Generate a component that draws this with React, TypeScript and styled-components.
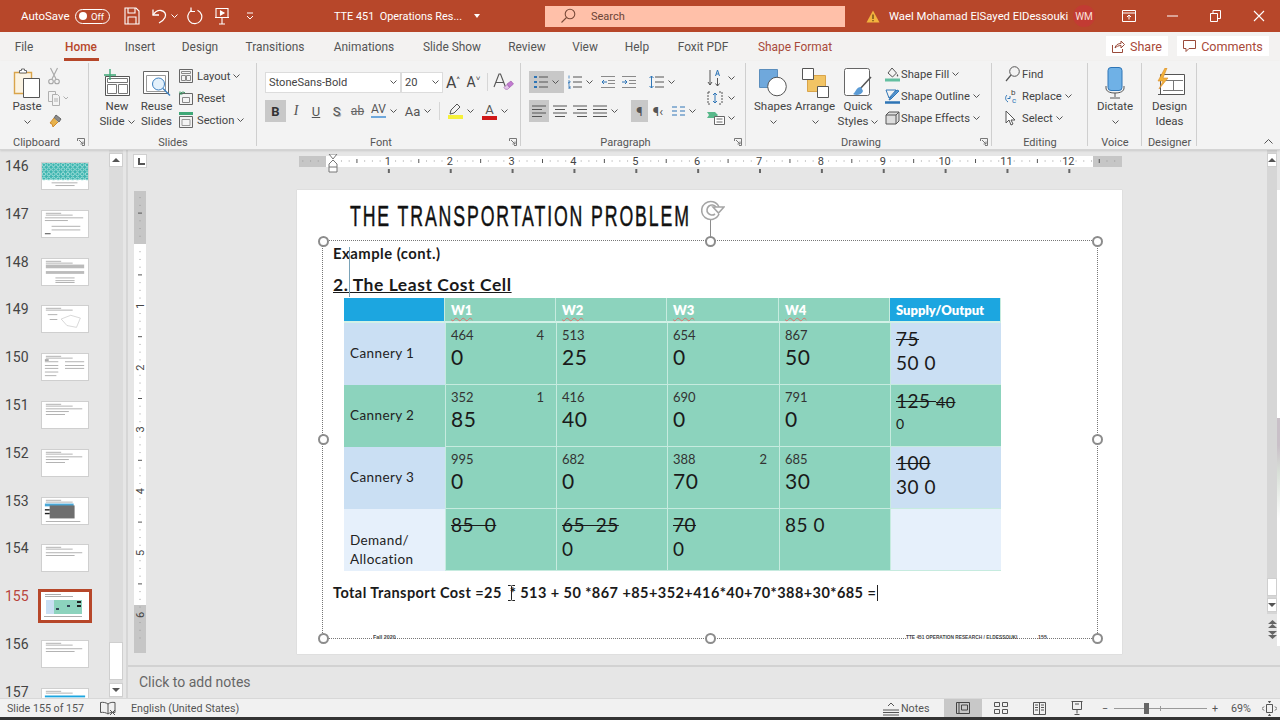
import React from 'react';
import styled, { createGlobalStyle } from 'styled-components';

const ui = `Roboto, "Liberation Sans", sans-serif`;
const gothic = `Lato, "Open Sans", sans-serif`;
const accent = '#B7472A';

const Global = createGlobalStyle`
  html, body { margin: 0; padding: 0; background: #e6e6e6; }
  #root { width: 1280px; height: 720px; overflow: hidden; }
  * { box-sizing: border-box; }
`;

const Page = styled.div`
  width: 1280px; height: 720px; display: flex; flex-direction: column;
  font-family: ${ui}; color: #444; overflow: hidden; background: #e6e6e6;
`;

/* ---------- icons ---------- */
const Svg = styled.svg`display: block; flex: none;`;
const Chev = ({ c = '#555' }: { c?: string }) => (
  <Svg width={7} height={4} viewBox="0 0 7 4" fill="none"><path d="M.5.5 3.500 3.500 6.500.5" stroke={c} /></Svg>
);
const SaveI = () => (
  <Svg width={16} height={18} viewBox="0 0 16 18" fill="none" stroke="#fff" strokeWidth="1.1">
    <path d="M1 1h11l3 3v13H1z" /><path d="M4 1v5h7V1M4 17v-7h8v7" />
  </Svg>
);
const UndoI = () => (
  <Svg width={18} height={18} viewBox="0 0 18 18" fill="none" stroke="#fff" strokeWidth="1.3">
    <path d="M2 8c2-3 5-5 8-4.500 4 .6 5.500 4 4 7-1 2-3 4-6 5.500" /><path d="M2 2.500V8h6" />
  </Svg>
);
const RedoI = () => (
  <Svg width={16} height={18} viewBox="0 0 16 18" fill="none" stroke="#fff" strokeWidth="1.2">
    <path d="M10.500 3.200A7 7 0 1 1 4.500 3.500" /><path d="M4 .5v4h4" />
  </Svg>
);
const PresentI = () => (
  <Svg width={16} height={18} viewBox="0 0 16 18" fill="none" stroke="#fff" strokeWidth="1.1">
    <path d="M2 1.500h12v9H2zM1 10.500h14M8 10.500V17M5 17h6" /><path d="M6.500 4l3.500 2-3.500 2z" fill="#fff" />
  </Svg>
);
const QatI = () => (
  <Svg width={8} height={8} viewBox="0 0 8 8" fill="none" stroke="#fff"><path d="M1 1h6M1 4l3 3 3-3" /></Svg>
);
const SearchI = () => (
  <Svg width={16} height={16} viewBox="0 0 16 16" fill="none" stroke="#7a4a3a" strokeWidth="1.1">
    <circle cx="10" cy="6" r="4.800" /><path d="M6.500 9.500 1.500 14.500" />
  </Svg>
);
const WarnI = () => (
  <Svg width={14} height={13} viewBox="0 0 14 13">
    <path d="M7 .5 13.500 12.500H.5z" fill="#F3B33E" /><path d="M7 4.500v4.500M7 10v1.300" stroke="#5a3a10" strokeWidth="1.200" />
  </Svg>
);
const RibbonDispI = () => (
  <Svg width={14} height={12} viewBox="0 0 14 12" fill="none" stroke="#fff">
    <path d="M.5.5h13v11H.5zM.5 3h13M7 9.500V5M5 7l2-2 2 2" />
  </Svg>
);
const MinI = () => <Svg width={11} height={2} viewBox="0 0 11 2"><path d="M0 1h11" stroke="#fff" /></Svg>;
const RestoreI = () => (
  <Svg width={11} height={12} viewBox="0 0 11 12" fill="none" stroke="#fff"><path d="M.5 3.500h7v8h-7zM3 3.500V.5h7.500v8H7.500" /></Svg>
);
const CloseI = () => (
  <Svg width={12} height={12} viewBox="0 0 12 12" stroke="#fff" strokeWidth="1.100"><path d="M1 1l10 10M11 1 1 11" /></Svg>
);
const PasteI = () => (
  <Svg width={28} height={31} viewBox="0 0 28 31" fill="none">
    <path d="M1.500 4.500h17v21h-17z" fill="#FBF3E2" stroke="#D9A44A" strokeWidth="1.400" />
    <path d="M6.500 5V2.500h2V1h3v1.500h2V5z" fill="#fff" stroke="#666" />
    <path d="M10.500 10.500h16v19h-16z" fill="#fff" stroke="#555" />
  </Svg>
);
const CutI = () => (
  <Svg width={12} height={18} viewBox="0 0 12 18" fill="none" stroke="#A6A6A6" strokeWidth="1.100">
    <path d="M2.500 1 8 12M9.500 1 4 12" /><circle cx="3" cy="14.500" r="2.300" /><circle cx="9" cy="14.500" r="2.300" />
  </Svg>
);
const CopyI = () => (
  <Svg width={20} height={15} viewBox="0 0 20 15" fill="none" stroke="#B0B0B0">
    <path d="M.5.5h7v10h-7z" /><path d="M4.500 3.500h5l2 2v9h-7z" fill="#f3f3f3" /><path d="M6 8h4M6 10h4" />
    <path d="M15.500 5.500l2.500 2.500 2-2" />
  </Svg>
);
const PainterI = () => (
  <Svg width={16} height={16} viewBox="0 0 16 16" fill="none">
    <path d="M8 3l5 4-2 3-5-4z" fill="#8a8a8a" stroke="#666" /><path d="M6 6 2 11l2 1 1 3 5-5" fill="#E7B24C" stroke="#D08A2C" />
  </Svg>
);
const NewSlideI = () => (
  <Svg width={28} height={28} viewBox="0 0 28 28" fill="none">
    <path d="M2.500 7.500h24v19h-24z" fill="#fff" stroke="#555" /><path d="M4.500 9.500h20v4h-20zM4.500 15.500h9v9h-9zM15.500 15.500h9v9h-9z" stroke="#777" />
    <path d="M7 0v11M1 6h12" stroke="#3FA877" strokeWidth="1.400" />
  </Svg>
);
const ReuseI = () => (
  <Svg width={30} height={29} viewBox="0 0 30 29" fill="none">
    <path d="M1.500 2.500h25v22h-25z" fill="#fff" stroke="#666" /><path d="M4.500 6.500h19v16h-19z" stroke="#999" />
    <circle cx="16.500" cy="15" r="6" fill="#E4F1FB" stroke="#3C80C0" /><path d="M21 19.500l7 7" stroke="#3C80C0" strokeWidth="1.400" />
  </Svg>
);
const LayoutI = () => (
  <Svg width={14} height={14} viewBox="0 0 14 14" fill="none" stroke="#666"><path d="M.5.5h13v13H.5z" /><path d="M2.500 2.500h9v2h-9zM2.500 6.500h4v5h-4zM7.500 6.500h4v5h-4z" stroke="#888" /></Svg>
);
const ResetI = () => (
  <Svg width={14} height={14} viewBox="0 0 14 14" fill="none"><path d="M.5 2.500h13v11H.5z" stroke="#666" /><path d="M3.500 6.500h7v5h-7z" stroke="#888" /><path d="M1 3c1-2 4-2.500 5-1M1 .5V3h2.500" stroke="#2E8B57" /></Svg>
);
const SectionI = () => (
  <Svg width={14} height={16} viewBox="0 0 14 16" fill="none"><path d="M0 1.500h14" stroke="#3FA877" strokeWidth="3" /><path d="M.5 4.500h13v11H.5z" stroke="#666" /><path d="M3 7.500h8v6H3z" stroke="#999" /></Svg>
);
const ClearI = () => (
  <Svg width={22} height={20} viewBox="0 0 22 20" fill="none">
    <path d="M2 15 7 2h1.500l5 13M4 10.500h7.500" stroke="#555" strokeWidth="1.100" />
    <path d="M15 12l4-3 2.500 3-4 3.500z" fill="#C27BD1" stroke="#9A55A8" strokeWidth=".6" /><path d="M12 15.500l3-3 2.500 3-2 1.800H13.500z" fill="#E3C4EA" stroke="#9A55A8" strokeWidth=".6" />
  </Svg>
);
const BulletI = () => (
  <Svg width={14} height={14} viewBox="0 0 14 14" stroke="#555"><path d="M5 2h9M5 7h9M5 12h9" /><path d="M0 2h3M0 7h3M0 12h3" stroke="#2E75B6" strokeWidth="2" /></Svg>
);
const NumberI = () => (
  <Svg width={14} height={14} viewBox="0 0 14 14" stroke="#555"><path d="M5 2h9M5 7h9M5 12h9" /><path d="M1 .5v3M0 6h2v1.500H0V9h2M0 11h2v3H0M.5 12.500H2" stroke="#2E75B6" strokeWidth=".8" fill="none" /></Svg>
);
const IndentI = ({ inc }: { inc?: boolean }) => (
  <Svg width={14} height={12} viewBox="0 0 14 12" fill="none" stroke="#8a8a8a">
    <path d="M0 .5h14M0 11.500h14M7 4.500h7M7 7.500h7" />
    <path d={inc ? 'M0 6h5M3 4l2 2-2 2' : 'M1 6h5M3 4 1 6l2 2'} stroke="#2E75B6" />
  </Svg>
);
const LineSpaceI = () => (
  <Svg width={15} height={14} viewBox="0 0 15 14" fill="none" stroke="#555"><path d="M6 2h9M6 7h9M6 12h9" /><path d="M2.500 1v12M.5 3l2-2 2 2M.5 11l2 2 2-2" stroke="#2E75B6" /></Svg>
);
const AlignI = ({ kind }: { kind: 'l' | 'c' | 'r' | 'j' }) => {
  const d = { l: 'M0 1h14M0 4.500h10M0 8h14M0 11.500h10', c: 'M0 1h14M2 4.500h10M0 8h14M2 11.500h10', r: 'M0 1h14M4 4.500h10M0 8h14M4 11.500h10', j: 'M0 1h14M0 4.500h14M0 8h14M0 11.500h14' }[kind];
  return <Svg width={14} height={12} viewBox="0 0 14 12" stroke="#555"><path d={d} /></Svg>;
};
const ColumnsI = () => (
  <Svg width={13} height={10} viewBox="0 0 13 10" stroke="#2E75B6"><path d="M0 1h5M0 5h5M0 9h5M8 1h5M8 5h5M8 9h5" /></Svg>
);
const DirI = () => (
  <Svg width={14} height={20} viewBox="0 0 14 20" fill="none" stroke="#555"><path d="M3 2v15M1 14l2 3 2-3" /><path d="M8.500 8 10.500 2l2 6M9.200 6h2.600" stroke="#2E75B6" /><path d="M10.500 10v8M8.500 15.500l2 2.500 2-2.500" /></Svg>
);
const AlignTextI = () => (
  <Svg width={16} height={14} viewBox="0 0 16 14" fill="none" stroke="#555"><path d="M1 1h3M12 1h3M1 13h3M12 13h3M1 1v12M15 1v12" strokeDasharray="2 1" /><path d="M8 2v10M6 4l2-2 2 2M6 10l2 2 2-2" stroke="#2E75B6" /></Svg>
);
const SmartI = () => (
  <Svg width={18} height={14} viewBox="0 0 18 14" fill="none"><path d="M0 1h8l3 3-3 3H0l2-3z" fill="#58B88A" /><path d="M7.500 5.500h10v8h-10z" fill="#fff" stroke="#666" /><path d="M9.500 8h6M9.500 11h6" stroke="#666" /></Svg>
);
const ShapesI = () => (
  <Svg width={28} height={28} viewBox="0 0 28 28" fill="none">
    <path d="M.5.500h18v18H.5z" fill="#6FA8DC" stroke="#5B8EBD" /><circle cx="18" cy="17.500" r="9.300" fill="#fff" stroke="#555" />
  </Svg>
);
const ArrangeI = () => (
  <Svg width={27} height={30} viewBox="0 0 27 30" fill="none">
    <path d="M5.500 7.500h18v16h-18z" fill="#F2C464" stroke="#D9A44A" /><path d="M.5.500h11v11H.5z" fill="#fff" stroke="#555" /><path d="M15.500 18.500h11v11h-11z" fill="#fff" stroke="#555" />
  </Svg>
);
const QuickI = () => (
  <Svg width={28} height={30} viewBox="0 0 28 30" fill="none">
    <rect x=".5" y=".5" width="25" height="27" rx="2" fill="#fff" stroke="#666" />
    <path d="M27 9 15 22" stroke="#555" strokeWidth="1.500" /><path d="M17 19c-5 0-5 5-8 7 3 2 9 1 10-3z" fill="#5B9BD5" />
  </Svg>
);
const FillI = () => (
  <Svg width={15} height={15} viewBox="0 0 15 15" fill="none"><path d="M7 1l4.500 5-4 4L3 6z" stroke="#555" /><path d="M12.500 7c1 1.500 1 2.500 0 2.500S11.500 8 12.500 7z" fill="#555" /><path d="M0 13h15" stroke="#63BFA0" strokeWidth="3" /></Svg>
);
const OutlineI = () => (
  <Svg width={15} height={15} viewBox="0 0 15 15" fill="none"><path d="M1 1h10L4 9z" fill="none" stroke="#2E75B6" /><path d="M12 1 5 9 4 11l2-1 8-8z" fill="#5B9BD5" stroke="#2E75B6" /><path d="M0 13.500h15" stroke="#2E75B6" strokeWidth="2.500" /></Svg>
);
const EffectI = () => (
  <Svg width={15} height={14} viewBox="0 0 15 14" fill="none" stroke="#555"><path d="M4 1h10v9l-3 3H1V4z" fill="#ddd" /><path d="M1 4h10v9M11 4l3-3" /></Svg>
);
const FindI = () => (
  <Svg width={15} height={16} viewBox="0 0 15 16" fill="none" stroke="#555"><circle cx="9.500" cy="5.500" r="4.800" /><path d="M6 9 1 15" strokeWidth="1.200" /></Svg>
);
const ReplaceI = () => (
  <Svg width={15} height={16} viewBox="0 0 15 16" fill="none">
    <path d="M2 7c-2 2-2 5 1 7M5 8v2.500H2.500" stroke="#2E75B6" />
    <text x="6" y="7" fontSize="8" fontFamily="Roboto" fill="#444">b</text><text x="7" y="15" fontSize="8" fontFamily="Roboto" fill="#2E75B6">c</text>
  </Svg>
);
const SelectI = () => (
  <Svg width={13} height={17} viewBox="0 0 13 17" fill="#fff" stroke="#555"><path d="M1 1v12l3-3 2 5 2-1-2-4h4z" /></Svg>
);
const MicI = () => (
  <Svg width={20} height={32} viewBox="0 0 20 32" fill="none">
    <rect x="3" y=".5" width="14" height="23" rx="3" fill="#6FB1E6" stroke="#2E75B6" />
    <path d="M1 19v2c0 3 3 5 9 5s9-2 9-5v-2M10 26v4M5 31h10" stroke="#555" />
  </Svg>
);
const IdeasI = () => (
  <Svg width={30} height={30} viewBox="0 0 30 30" fill="none">
    <path d="M5.500 6.500h24v20h-24z" fill="#fff" stroke="#555" /><path d="M8 22.500h20M18.500 12.500v10M8 12.500h20" stroke="#777" />
    <path d="M3 26.500h24" stroke="#555" />
    <path d="M10 0 3 13h5L4 21l9-11H8l4-10z" fill="#F2B33A" stroke="#D8892A" strokeWidth=".6" />
  </Svg>
);
const Launcher = () => (
  <Svg width={8} height={8} viewBox="0 0 8 8" fill="none" stroke="#777"><path d="M.5 3V.5H7.500V7.500H5M2 2l4 4M3.500 6H6V3.500" /></Svg>
);
const ShareI = () => (
  <Svg width={13} height={13} viewBox="0 0 13 13" fill="none" stroke="#9a4a3a"><path d="M.5 5v7.500h10V9" /><path d="M3 8c.5-3 3-4.500 6-4.500V1l3.500 3.500L9 8V5.500C6.500 5.500 4.500 6.500 3 8z" /></Svg>
);
const CommentI = () => (
  <Svg width={13} height={12} viewBox="0 0 13 12" fill="none" stroke="#9a4a3a"><path d="M.5.5h12v8H6l-3 3v-3H.5z" /></Svg>
);
const CollapseI = () => (
  <Svg width={9} height={5} viewBox="0 0 9 5" fill="none" stroke="#555"><path d="M.5 4.500l4-4 4 4" /></Svg>
);
const SpellI = () => (
  <Svg width={16} height={15} viewBox="0 0 16 15" fill="none" stroke="#555"><path d="M8 3C6 1.500 3 1 .5 1.500v10C3 11 6 11.500 8 13 10 11.500 12 11 15 11.500V1.500C12 1 10 1.500 8 3zM8 3v10" /><path d="M10 9l5 5M15 9l-5 5" /></Svg>
);
const NotesI = () => (
  <Svg width={16} height={15} viewBox="0 0 16 15" fill="none" stroke="#555"><path d="M0 9h16M0 11.500h16M0 14h16M5 5l3-3 3 3" /></Svg>
);
const NormalI = () => (
  <Svg width={14} height={12} viewBox="0 0 14 12" fill="none" stroke="#444"><path d="M.5.5h13v11H.5zM3 .5v11M5.500 3h6v5h-6z" /></Svg>
);
const SorterI = () => (
  <Svg width={14} height={12} viewBox="0 0 14 12" fill="none" stroke="#555"><path d="M.5.5h5v4h-5zM8.500.5h5v4h-5zM.5 7.500h5v4h-5zM8.500 7.500h5v4h-5z" /></Svg>
);
const ReadI = () => (
  <Svg width={13} height={13} viewBox="0 0 13 13" fill="none" stroke="#555"><path d="M.5.5h12v12H.5zM6.500.5v12M2 3h3M2 5.500h3M2 8h3M8 3h3M8 5.500h3M8 8h3" /></Svg>
);
const ShowI = () => (
  <Svg width={12} height={14} viewBox="0 0 12 14" fill="none" stroke="#555"><path d="M.5.5h11M1.500.5v8h9v-8M6 8.500v4M3.500 13.500h5M4 3h4" /></Svg>
);
const FitI = () => (
  <Svg width={15} height={15} viewBox="0 0 15 15" fill="none" stroke="#555"><path d="M4.500 3.500h6v8h-6zM7.500 2V0M6 1l1.500-1L9 1M7.500 13v2M6 14l1.500 1L9 14M2 5.500 0 7.500l2 2M13 5.500l2 2-2 2" /></Svg>
);
const RotateI = () => (
  <Svg width={24} height={22} viewBox="0 0 24 22" fill="none" stroke="#a5a5a5" strokeWidth="1.600">
    <path d="M18 14a9 9 0 1 1 0-7" /><path d="M14 14a5 5 0 1 1 1-7" /><path d="M12 7h11l-5.500 6z" fill="#fff" />
  </Svg>
);
const IBeamI = () => (
  <Svg width={7} height={16} viewBox="0 0 7 16" fill="none" stroke="#222"><path d="M0 .5h2.500c.6 0 1 .4 1 1v13c0 .6.4 1 1 1H7M7 .5H4.500c-.6 0-1 .4-1 1M0 15.500h2.500c.6 0 1-.4 1-1" /></Svg>
);
const NavI = ({ down }: { down?: boolean }) => (
  <Svg width={9} height={9} viewBox="0 0 9 9" fill="#666">
    <path d={down ? 'M0 0h9L4.500 4zM0 4h9L4.500 8z' : 'M0 4h9L4.500 0zM0 8h9L4.500 4z'} />
  </Svg>
);

/* ---------- title bar ---------- */
const TitleBar = styled.header`
  height: 32px; flex: none; background: ${accent}; display: flex; align-items: center; color: #fff; font-size: 11.200px;
`;
const Qat = styled.div`display: flex; align-items: center; padding-left: 21px; width: 334px; flex: none;`;
const QatLabel = styled.span`width: 47px; white-space: nowrap; font-size: 11.500px;`;
const Toggle = styled.div`
  width: 35px; height: 15px; margin: 0 14px 0 7px; border: 1px solid #fff; border-radius: 8px; display: flex;
  align-items: center; gap: 4px; padding-left: 3px; font-size: 9.500px; flex: none;
  &::before { content: ''; width: 8px; height: 8px; border-radius: 50%; background: #fff; }
`;
const QatSlot = styled.span<{ $gap: number }>`margin-left: ${p => p.$gap}px; display: flex;`;
const DocTitle = styled.div`
  width: 211px; flex: none; display: flex; align-items: center; gap: 9px; white-space: pre; font-size: 10.900px;
`;
const SearchBox = styled.div`
  width: 300px; height: 21px; flex: none; background: #FFC0A9; color: #6b4436; display: flex; align-items: center;
  padding-left: 15px; gap: 15px; font-size: 11px;
`;
const User = styled.div`display: flex; align-items: center; padding-left: 21px; flex: none; width: 262px;`;
const UserName = styled.span`margin-left: 9px; width: 174px; white-space: nowrap; font-size: 11.300px;`;
const Avatar = styled.span`
  width: 22px; height: 22px; border-radius: 50%; margin-left: 10px; background: #C23B33; color: #fbe0dc; font-size: 10px;
  display: flex; align-items: center; justify-content: center; flex: none;
`;
const WinBtn = styled.div`width: 43.500px; flex: none; display: flex; justify-content: center;`;

/* ---------- tabs ---------- */
const TabRow = styled.nav`
  height: 29px; flex: none; background: #F3F2F1; display: flex; align-items: stretch; padding-left: 8px; font-size: 11.900px;
`;
const Tab = styled.div<{ $w: number; $on?: boolean; $ctx?: boolean }>`
  width: ${p => p.$w}px; flex: none; text-align: center; line-height: 30px; position: relative; white-space: nowrap;
  color: ${p => (p.$ctx ? '#A94A3A' : p.$on ? accent : '#555')};
  font-weight: ${p => (p.$on ? 500 : 400)};
  ${p => p.$on && `&::after { content: ''; position: absolute; left: 24px; width: 35px; bottom: 0; height: 3px; background: ${accent}; }`}
`;
const TabSpacer = styled.div<{ $w?: number }>`flex: ${p => (p.$w ? `0 0 ${p.$w}px` : '1')};`;
const TabAction = styled.div<{ $w: number; $gap: number }>`
  width: ${p => p.$w}px; margin-left: ${p => p.$gap}px; height: 20px; margin-top: 4px; background: #fff; color: #A94A3A; display: flex;
  align-items: center; justify-content: center; gap: 5px; font-size: 12.600px;
`;

/* ---------- ribbon ---------- */
const Ribbon = styled.section`
  height: 89px; flex: none; background: #F3F3F3; display: flex; position: relative; z-index: 2;
  border-bottom: 1px solid #d4d4d4; box-shadow: 0 1px 2px rgba(0,0,0,.12);
`;
const Group = styled.div<{ $w: number }>`
  width: ${p => p.$w}px; flex: none; height: 87px; display: flex; flex-direction: column; position: relative;
  &::after { content: ''; position: absolute; right: 0; top: 2px; bottom: 2px; width: 1.500px; background: #CFCFCF; }
`;
const GroupBody = styled.div<{ $pad?: number }>`height: 75px; display: flex; padding-left: ${p => p.$pad ?? 0}px;`;
const GroupFoot = styled.div`display: flex; align-items: center; height: 12px; font-size: 11px; color: #555;`;
const GroupLabel = styled.span`flex: 1; text-align: center;`;
const LauncherBox = styled.span`width: 16px; display: flex; justify-content: center; flex: none;`;
const Big = styled.div<{ $w: number; $gap?: number }>`
  width: ${p => p.$w}px; margin-left: ${p => p.$gap ?? 0}px; flex: none; display: flex; flex-direction: column; align-items: center;
  font-size: 11.500px; line-height: 15px; color: #444; white-space: nowrap;
`;
const BigIcon = styled.div`height: 32px; margin-top: 6px; display: flex; align-items: center; justify-content: center;`;
const BigLine = styled.div`height: 15px; display: flex; align-items: center; gap: 3px;`;
const SmallCol = styled.div<{ $top?: number; $gap?: number; $row?: number }>`
  display: flex; flex-direction: column; padding-top: ${p => p.$top ?? 4}px; margin-left: ${p => p.$gap ?? 0}px;
  & > * { height: ${p => p.$row ?? 22}px; }
`;
const SmallRow = styled.div<{ $iw?: number; $tx?: number }>`
  display: flex; align-items: center; font-size: 11.200px; color: #444; white-space: nowrap;
  & > svg:first-child { margin-right: ${p => (p.$tx ?? 16) - (p.$iw ?? 14)}px; }
  & > svg:not(:first-child) { margin-left: 3px; }
`;
const Stack = styled.div`display: flex; flex-direction: column; gap: 7px; padding-top: 10px;`;
const ToolRow = styled.div`display: flex; align-items: center; height: 22px;`;
const FontBox = styled.div<{ $w: number }>`
  width: ${p => p.$w}px; height: 21px; background: #fff; border: 1px solid #dcdcdc; display: flex; align-items: center;
  justify-content: space-between; padding: 0 3px; font-size: 11.100px; color: #444; flex: none;
`;
const Tool = styled.div<{ $w: number; $on?: boolean }>`
  width: ${p => p.$w}px; height: 22px; flex: none; display: flex; align-items: center; justify-content: center; gap: 4px;
  background: ${p => (p.$on ? '#C8C8C8' : 'transparent')}; font-size: 13px; color: #555;
`;
const ToolSep = styled.span`width: 1px; height: 18px; background: #d6d6d6; margin: 0 3px; flex: none;`;
const FmtB = styled.b`font-size: 13px; color: #333;`;
const FmtI = styled.i`font-family: "Liberation Serif", serif; font-size: 14px;`;
const FmtU = styled.u`font-size: 13px;`;
const FmtS = styled.span`font-size: 13px; text-shadow: 1px 1px 0 #aaa;`;
const FmtAb = styled.s`font-size: 12px; color: #666;`;
const FmtAV = styled.span`
  font-size: 12px; line-height: 11px; color: #555; border-bottom: 2px solid #6FA8DC; padding-bottom: 1px; display: block;
`;
const FmtBig = styled.span<{ $s?: number }>`font-size: ${p => p.$s ?? 16}px; color: #444; & > sup { font-size: 8px; vertical-align: 6px; }`;
const ColorA = styled.span<{ $c: string }>`
  font-size: 13px; line-height: 13px; color: #555; border-bottom: 4px solid ${p => p.$c}; display: block; width: 15px; text-align: center;
`;
const Tail = styled.div`flex: 1; display: flex; align-items: flex-end; justify-content: flex-end; padding: 0 7px 5px 0;`;

/* ---------- workspace ---------- */
const Workspace = styled.main`flex: 1; display: flex; min-height: 0; position: relative;`;
const ThumbPane = styled.aside`
  width: 128px; flex: none; display: flex; border-right: 2px solid #D6D6D6; background: #E6E6E6;
`;
const ThumbList = styled.div`width: 109px; flex: none; overflow: hidden; padding-top: 12px;`;
const ThumbRow = styled.div`height: 47.800px; display: flex; padding-left: 5px;`;
const ThumbNum = styled.span<{ $on?: boolean }>`
  width: 36px; flex: none; font-size: 14px; line-height: 16px; margin-top: -4px; color: ${p => (p.$on ? '#B8443C' : '#444')};
`;
const ThumbBox = styled.div<{ $on?: boolean }>`
  width: 48px; height: 28px; background: #fff; border: 1px solid #cfcfcf; flex: none; overflow: hidden;
  ${p => p.$on && `outline: 3px solid ${accent}; border: 0;`}
`;
const VScroll = styled.div<{ $w: number }>`
  width: ${p => p.$w}px; flex: none; background: #DCDCDC; display: flex; flex-direction: column; padding-top: 3px;
`;
const ScrollBtn = styled.div<{ $gap?: number }>`
  height: 14px; margin-top: ${p => p.$gap ?? 0}px; background: #fff; border: 1px solid #cfcfcf; display: flex; align-items: center; justify-content: center; flex: none;
`;
const ScrollThumb = styled.div<{ $h: number; $gap: number }>`
  height: ${p => p.$h}px; margin-top: ${p => p.$gap}px; background: #fff; border: 1px solid #cfcfcf; flex: none;
`;
const Tri = styled.span<{ $down?: boolean }>`
  width: 0; height: 0; border-left: 4px solid transparent; border-right: 4px solid transparent;
  ${p => (p.$down ? 'border-top: 4px solid #555;' : 'border-bottom: 4px solid #555;')}
`;
const Editor = styled.div`flex: 1; display: flex; flex-direction: column; min-width: 0;`;
const EditArea = styled.div`
  flex: 1; display: grid; grid-template-columns: 169px 825px 1fr; grid-template-rows: 40px 464px; min-height: 0;
`;
const RulerCorner = styled.div`padding: 4px 0 0 5px;`;
const CornerBtn = styled.div`
  width: 14px; height: 14px; background: #fff; border: 1px solid #d0d0d0; position: relative;
  &::after { content: ''; position: absolute; left: 4px; top: 3px; width: 5px; height: 5px; border-left: 2px solid #555; border-bottom: 2px solid #555; }
`;
const HRulerWrap = styled.div`padding: 4px 0 0 2px;`;
const VRulerWrap = styled.div`padding: 1px 0 0 6px;`;
const RightCol = styled.div`grid-column: 3; grid-row: 1 / 3; display: flex; justify-content: flex-end;`;
const RightTrack = styled.div`width: 10px; display: flex; flex-direction: column; background: #D6D6D6; padding-top: 3px; margin-right: 3px;`;
const RightStrip = styled.div`
  width: 3px; position: absolute; right: 0; top: 40px; height: 456px;
  background: linear-gradient(#fff 0 50%, #c9c0c8 50% 56%, #d9e0d8 62%, #fff 72%);
`;
const NavStack = styled.div`flex: 1; background: #E6E6E6; margin-top: 2px; padding-top: 6px; display: flex; flex-direction: column; align-items: center; gap: 2px;`;

const Slide = styled.article`
  width: 825px; height: 464px; background: #fff; position: relative; padding: 14px 0 0 36px; box-shadow: 0 0 1px #bbb;
  font-family: Lato, "Open Sans", sans-serif; color: #1a1a1a;
`;
const SlideTitle = styled.h1`
  margin: 0 0 0 17px; font: 400 30px/24px "Liberation Sans", sans-serif; letter-spacing: 3.200px; -webkit-text-stroke: .5px #111;
  transform: scaleX(.59); transform-origin: left center; white-space: nowrap; color: #111;
`;
const BodyLine = styled.p`margin: 15px 0 0; font-weight: 700; font-size: 14.800px; letter-spacing: .5px; line-height: 20px;`;
const Heading = styled.h2`margin: 10px 0 0; font-weight: 700; font-size: 17.500px; letter-spacing: .55px; line-height: 24px; text-decoration: underline;`;
const Table = styled.div`
  margin: 1px 0 0 11px; width: 657px; display: grid; grid-template-columns: 101px 111px 111px 112px 111px 111px;
  grid-template-rows: 25px repeat(4, 62px); font-family: ${gothic}; letter-spacing: 0;
`;
const Th = styled.div<{ $blue?: boolean }>`
  background: ${p => (p.$blue ? '#1CA6E0' : '#8CD3BD')}; color: #fff; font-weight: 800; font-size: 13px; padding-left: 6px; line-height: 25px;
  border-right: 1px solid #C6EBDF; border-bottom: 2px solid #D2F1E7; white-space: nowrap;
`;
const Wavy = styled.span`text-decoration: underline wavy #E0716B 1px; text-underline-offset: 2px;`;
const RowHead = styled.div<{ $bg: string; $last?: boolean }>`
  background: ${p => p.$bg}; display: flex; align-items: center; padding: 0 0 1px 6px; font-size: 13.500px; letter-spacing: .4px;
  color: #222; line-height: 19px; ${p => p.$last && 'padding-top: 20px;'}
`;
const Cell = styled.div<{ $bg?: string; $tight?: boolean }>`
  background: ${p => p.$bg ?? '#8CD3BD'}; border-left: 1px solid #C6EBDF; border-bottom: 1px solid #C6EBDF;
  padding: ${p => (p.$tight ? 4 : 6)}px 12px 0 5px; color: #1a1a1a; min-width: 0;
`;
const CostLine = styled.div`display: flex; justify-content: space-between; font-size: 13px; line-height: 13px; color: #333;`;
const BigNum = styled.div`font-size: 21px; line-height: 24px; margin-top: 3px; letter-spacing: .6px;`;
const SupplyNum = styled.div<{ $size?: number; $h?: number }>`font-size: ${p => p.$size ?? 19}px; line-height: ${p => p.$h ?? 24}px; letter-spacing: .5px; white-space: pre;`;
const Strike = styled.s``;
const SmallStrike = styled.s`font-size: 16px;`;
const TotalLine = styled.p`margin: 12px 0 0; font-weight: 700; font-size: 14.500px; letter-spacing: .44px; line-height: 20px; white-space: pre; display: flex; align-items: center;`;
const Caret = styled.span`width: 1px; height: 16px; background: #222; display: block; margin-left: 1px;`;
const FooterRow = styled.div`
  margin-top: 30px; height: 8px; display: flex; font: 700 6px/8px "Liberation Sans", sans-serif; color: #444; position: relative; z-index: 1;
`;
const FootText = styled.span<{ $x: number; $w: number; $sx: number }>`
  margin-left: ${p => p.$x}px; width: ${p => p.$w}px; white-space: nowrap; background: #fff; display: block;
  transform: scaleX(${p => p.$sx}); transform-origin: left center;
`;
const Selection = styled.div`
  position: absolute; left: 25px; top: 50px; width: 776px; height: 399px; border: 1px dotted #777; pointer-events: none;
`;
const Handle = styled.span<{ $x: number; $y: number }>`
  position: absolute; left: ${p => p.$x}%; top: ${p => p.$y}%; width: 11px; height: 11px; margin: -5.500px 0 0 -5.500px;
  border-radius: 50%; background: #fff; border: 2px solid #8c8c8c; z-index: 2;
`;
const RotStem = styled.span`position: absolute; left: 50%; top: -22px; height: 20px; width: 1px; background: #8c8c8c;`;
const RotIcon = styled.span`position: absolute; left: calc(50% - 9px); top: -41px;`;
const TextCursor = styled.span`position: absolute; left: 52px; top: 57px; width: 1px; height: 50px; background: #7aa3b8;`;
const MouseBeam = styled.span`position: absolute; left: 211px; top: 395px;`;

const NotesPane = styled.div`
  height: 33px; flex: none; border-top: 2px solid #D2D2D2; padding: 7px 0 0 11px; font-size: 14px; line-height: 17px; color: #666; background: #E6E6E6;
`;
const StatusBar = styled.footer`
  height: 19px; flex: none; background: #F1F1F1; border-top: 1px solid #d8d8d8; display: flex; align-items: center; font-size: 10.700px; color: #555;
  padding-left: 7px;
`;
const StatusText = styled.span<{ $w: number; $center?: boolean; $pad?: number }>`
  width: ${p => p.$w}px; padding-left: ${p => p.$pad ?? 0}px; white-space: nowrap; flex: none; text-align: ${p => (p.$center ? 'center' : 'left')};
`;
const StatusIcon = styled.span<{ $w: number; $on?: boolean }>`
  width: ${p => p.$w}px; height: 18px; flex: none; display: flex; align-items: center; justify-content: center;
  background: ${p => (p.$on ? '#C8C8C8' : 'transparent')};
`;
const ZoomBar = styled.div`
  width: 93px; height: 1px; background: #9a9a9a; position: relative; flex: none;
  &::before { content: ''; position: absolute; left: 30px; top: -5px; width: 5px; height: 11px; background: #666; }
  &::after { content: ''; position: absolute; left: 46px; top: -2px; width: 1px; height: 5px; background: #9a9a9a; }
`;
const BottomStrip = styled.div`height: 3px; flex: none; background: #333;`;

/* ---------- ruler drawings ---------- */
const HRuler = () => {
  const inch = 61.86, z = 27;
  const ticks: React.ReactNode[] = [];
  for (let i = -3; i < 103; i++) {
    const x = z + (i * inch) / 8;
    if (x < 2 || x > 821) continue;
    if (i % 8 === 0) {
      if (i > 0) ticks.push(<text key={i} x={x} y={11} fontSize="11" textAnchor="middle" fontFamily="Roboto" fill="#444">{i / 8}</text>);
    } else if (i % 4 === 0) ticks.push(<path key={i} d={`M${x} 5v4`} stroke="#555" />);
    else ticks.push(<path key={i} d={`M${x} 6.500v1`} stroke="#999" />);
  }
  const stops = Array.from({ length: 12 }, (_, i) => z + (i + 1) * inch + 1);
  return (
    <Svg width={823} height={24} viewBox="0 0 823 24">
      <rect x="0" y="2" width="823" height="11" fill="#C6C6C6" />
      <rect x="27" y="2" width="767" height="11" fill="#fff" />
      {ticks}
      {stops.map(t => <path key={t} d={`M${t} 15v4`} stroke="#666" strokeWidth="2" />)}
      <path d="M30 0h8l-4 5z" fill="#fff" stroke="#777" />
      <path d="M34 6l4 4v8h-8v-8zM30 13h8" fill="#fff" stroke="#777" />
    </Svg>
  );
};
const VRuler = () => {
  const inch = 61.8, z = 53;
  const ticks: React.ReactNode[] = [];
  for (let i = -6; i < 52; i++) {
    const y = z + (i * inch) / 8;
    if (y < 1 || y > 461) continue;
    if (i % 8 === 0) {
      if (i > 0) ticks.push(<text key={i} x={0} y={0} transform={`translate(10 ${y}) rotate(-90)`} fontSize="11" textAnchor="middle" fontFamily="Roboto" fill="#444">{i / 8}</text>);
    } else if (i % 4 === 0) ticks.push(<path key={i} d={`M4 ${y}h4`} stroke="#555" />);
    else ticks.push(<path key={i} d={`M5.500 ${y}h1`} stroke="#999" />);
  }
  return (
    <Svg width={12} height={462} viewBox="0 0 12 462">
      <rect width="12" height="462" fill="#C6C6C6" />
      <rect y="53" width="12" height="361" fill="#fff" />
      {ticks}
    </Svg>
  );
};

/* ---------- thumbnails ---------- */
const Lines = ({ rows }: { rows: [number, number, number][] }) => (
  <>{rows.map(([x, y, w], i) => <rect key={i} x={x} y={y} width={w} height=".8" fill="#999" />)}</>
);
const head: [number, number, number][] = [[4, 2, 16], [4, 4, 28]];
const Thumb = ({ n }: { n: number }) => {
  let art: React.ReactNode = null;
  if (n === 146) art = (
    <>
      <rect width="48" height="18" fill="#3FB5B0" />
      {Array.from({ length: 40 }, (_, i) => <circle key={i} cx={(i % 10) * 5 + 2} cy={Math.floor(i / 10) * 5 + 2} r="1.800" fill="none" stroke="#C9EFEA" strokeWidth=".7" />)}
      <Lines rows={[[10, 21, 27], [14, 24, 20]]} />
    </>
  );
  else if (n === 147) art = <><Lines rows={[...head, [3, 7, 40], [3, 10, 24], [10, 16, 30], [10, 20, 30]]} /><rect x="3" y="24" width="6" height="1" fill="#444" /></>;
  else if (n === 148) art = <><rect x="4" y="6" width="40" height="4" fill="#bbb" /><rect x="4" y="13" width="40" height="3" fill="#bbb" /><Lines rows={[...head, [14, 20, 20], [14, 23, 20], [14, 25, 20]]} /></>;
  else if (n === 149) art = <><Lines rows={[...head, [6, 9, 10], [8, 14, 8]]} /><path d="M20 14l10-4 10 3-4 10-10-2z" fill="none" stroke="#bbb" strokeWidth=".6" /></>;
  else if (n === 150) art = <><Lines rows={[...head, [3, 8, 14], [3, 12, 14], [3, 15, 14], [3, 19, 14], [3, 23, 12], [24, 8, 20], [24, 12, 20], [24, 15, 20]]} /><rect x="3" y="6" width="4" height="1" fill="#555" /></>;
  else if (n === 151 || n === 152) art = <Lines rows={[...head, [4, 7, 38], [4, 10, 24], [4, 13, 20]]} />;
  else if (n === 153) art = <><Lines rows={[...head, [4, 25, 36]]} /><rect x="3" y="6" width="30" height="3" fill="#4AA8D8" /><rect x="8" y="8" width="26" height="14" fill="#6E6E6E" /><rect x="3" y="12" width="5" height="1.500" fill="#222" /><rect x="3" y="16" width="5" height="1.500" fill="#222" /></>;
  else if (n === 154 || n === 156) art = <Lines rows={[...head, [4, 8, 38], [4, 11, 30]]} />;
  else if (n === 155) art = <><Lines rows={[...head, [3, 24, 38]]} /><rect x="5" y="8" width="36" height="14" fill="#8CD3BD" /><rect x="5" y="8" width="8" height="14" fill="#CADFF3" /><rect x="36" y="9" width="4" height="2" fill="#222" /><rect x="36" y="13" width="4" height="2" fill="#222" /><rect x="15" y="16" width="3" height="2" fill="#345" /><rect x="26" y="13" width="3" height="2" fill="#345" /></>;
  else if (n === 157) art = <><Lines rows={[...head]} /><rect x="3" y="7" width="42" height="2" fill="#1CA6E0" /><rect x="3" y="11" width="42" height="4" fill="#5BBCE6" /></>;
  return <Svg width="100%" height="100%" viewBox="0 0 48 28" preserveAspectRatio="none">{art}</Svg>;
};

/* ---------- data ---------- */
const tabs: [string, number][] = [['File', 32], ['Home', 82], ['Insert', 36], ['Design', 84], ['Transitions', 66], ['Animations', 112], ['Slide Show', 64], ['Review', 86], ['View', 30], ['Help', 74], ['Foxit PDF', 58]];
const thumbs = Array.from({ length: 12 }, (_, i) => 146 + i);
const handles: [number, number][] = [[0, 0], [50, 0], [100, 0], [0, 50], [100, 50], [0, 100], [50, 100], [100, 100]];
const lightBlue = '#CADFF3';
const pale = '#E6F0FB';
const green = '#8CD3BD';

const CostCell = ({ cost, rank, value }: { cost: number; rank?: number; value: number }) => (
  <Cell>
    <CostLine><span>{cost}</span>{rank && <span>{rank}</span>}</CostLine>
    <BigNum>{value}</BigNum>
  </Cell>
);

export default function App() {
  return (
    <Page>
      <Global />
      <TitleBar>
        <Qat>
          <QatLabel>AutoSave</QatLabel>
          <Toggle>Off</Toggle>
          <SaveI />
          <QatSlot $gap={11}><UndoI /></QatSlot>
          <QatSlot $gap={2}><Chev c="#fff" /></QatSlot>
          <QatSlot $gap={9}><RedoI /></QatSlot>
          <QatSlot $gap={11}><PresentI /></QatSlot>
          <QatSlot $gap={16}><QatI /></QatSlot>
        </Qat>
        <DocTitle>TTE 451  Operations Res... <Svg width={6} height={4} viewBox="0 0 6 4"><path d="M0 0h6L3 4z" fill="#fff" /></Svg></DocTitle>
        <SearchBox><SearchI />Search</SearchBox>
        <User>
          <WarnI />
          <UserName>Wael Mohamad ElSayed ElDessouki</UserName>
          <Avatar>WM</Avatar>
        </User>
        <WinBtn><RibbonDispI /></WinBtn>
        <WinBtn><MinI /></WinBtn>
        <WinBtn><RestoreI /></WinBtn>
        <WinBtn><CloseI /></WinBtn>
      </TitleBar>

      <TabRow>
        {tabs.map(([t, w]) => <Tab key={t} $w={w} $on={t === 'Home'}>{t}</Tab>)}
        <Tab $w={126} $ctx>Shape Format</Tab>
        <TabSpacer />
        <TabAction $w={62} $gap={0}><ShareI />Share</TabAction>
        <TabAction $w={92} $gap={9}><CommentI />Comments</TabAction>
        <TabSpacer $w={11} />
      </TabRow>

      <Ribbon>
        <Group $w={89}>
          <GroupBody $pad={6}>
            <Big $w={42}><BigIcon><PasteI /></BigIcon><BigLine>Paste</BigLine><BigLine><Chev /></BigLine></Big>
            <SmallCol>
              <SmallRow $iw={12}><CutI /></SmallRow>
              <SmallRow $iw={20}><CopyI /></SmallRow>
              <SmallRow $iw={16}><PainterI /></SmallRow>
            </SmallCol>
          </GroupBody>
          <GroupFoot><GroupLabel>Clipboard</GroupLabel><LauncherBox><Launcher /></LauncherBox></GroupFoot>
        </Group>

        <Group $w={168}>
          <GroupBody $pad={8}>
            <Big $w={40}><BigIcon><NewSlideI /></BigIcon><BigLine>New</BigLine><BigLine>Slide <Chev /></BigLine></Big>
            <Big $w={39}><BigIcon><ReuseI /></BigIcon><BigLine>Reuse</BigLine><BigLine>Slides</BigLine></Big>
            <SmallCol $gap={3}>
              <SmallRow $tx={18}><LayoutI />Layout <Chev /></SmallRow>
              <SmallRow $tx={18}><ResetI />Reset</SmallRow>
              <SmallRow $tx={18}><SectionI />Section <Chev /></SmallRow>
            </SmallCol>
          </GroupBody>
          <GroupFoot><GroupLabel>Slides</GroupLabel></GroupFoot>
        </Group>

        <Group $w={264}>
          <GroupBody $pad={8}>
            <Stack>
              <ToolRow>
                <FontBox $w={136}>StoneSans-Bold <Chev /></FontBox>
                <FontBox $w={42}>20 <Chev /></FontBox>
                <Tool $w={20}><FmtBig>A<sup>^</sup></FmtBig></Tool>
                <Tool $w={21}><FmtBig $s={14}>A<sup>˅</sup></FmtBig></Tool>
                <ToolSep />
                <Tool $w={24}><ClearI /></Tool>
              </ToolRow>
              <ToolRow>
                <Tool $w={21} $on><FmtB>B</FmtB></Tool>
                <Tool $w={20}><FmtI>I</FmtI></Tool>
                <Tool $w={20}><FmtU>U</FmtU></Tool>
                <Tool $w={21}><FmtS>S</FmtS></Tool>
                <Tool $w={21}><FmtAb>ab</FmtAb></Tool>
                <Tool $w={32}><FmtAV>AV</FmtAV><Chev /></Tool>
                <Tool $w={36}>Aa <Chev /></Tool>
                <ToolSep />
                <Tool $w={36}><ColorA $c="#F5F03A"><Svg width={13} height={12} viewBox="0 0 13 12" fill="none" stroke="#555"><path d="M9 1l3 3-6 6-4 1 1-4z" /></Svg></ColorA><Chev /></Tool>
                <Tool $w={32}><ColorA $c="#D01818">A</ColorA><Chev /></Tool>
              </ToolRow>
            </Stack>
          </GroupBody>
          <GroupFoot><GroupLabel>Font</GroupLabel><LauncherBox><Launcher /></LauncherBox></GroupFoot>
        </Group>

        <Group $w={225}>
          <GroupBody $pad={8}>
            <Stack>
              <ToolRow>
                <Tool $w={35} $on><BulletI /><Chev /></Tool>
                <Tool $w={33}><NumberI /><Chev /></Tool>
                <Tool $w={22}><IndentI /></Tool>
                <Tool $w={20}><IndentI inc /></Tool>
                <Tool $w={6} />
                <Tool $w={33}><LineSpaceI /><Chev /></Tool>
              </ToolRow>
              <ToolRow>
                <Tool $w={20} $on><AlignI kind="l" /></Tool>
                <Tool $w={21}><AlignI kind="c" /></Tool>
                <Tool $w={20}><AlignI kind="r" /></Tool>
                <Tool $w={30}><AlignI kind="j" /><Chev /></Tool>
                <Tool $w={11} />
                <Tool $w={17} $on>¶</Tool>
                <Tool $w={20}>¶‹</Tool>
                <Tool $w={32}><ColumnsI /><Chev /></Tool>
              </ToolRow>
            </Stack>
            <SmallCol $top={7} $gap={7} $row={20}>
              <SmallRow $iw={14} $tx={18}><DirI /><Chev /></SmallRow>
              <SmallRow $iw={16} $tx={18}><AlignTextI /><Chev /></SmallRow>
              <SmallRow $iw={18} $tx={18}><SmartI /><Chev /></SmallRow>
            </SmallCol>
          </GroupBody>
          <GroupFoot><GroupLabel>Paragraph</GroupLabel><LauncherBox><Launcher /></LauncherBox></GroupFoot>
        </Group>

        <Group $w={246}>
          <GroupBody $pad={7}>
            <Big $w={40}><BigIcon><ShapesI /></BigIcon><BigLine>Shapes</BigLine><BigLine><Chev /></BigLine></Big>
            <Big $w={40} $gap={2}><BigIcon><ArrangeI /></BigIcon><BigLine>Arrange</BigLine><BigLine><Chev /></BigLine></Big>
            <Big $w={40} $gap={3}><BigIcon><QuickI /></BigIcon><BigLine>Quick</BigLine><BigLine>Styles <Chev /></BigLine></Big>
            <SmallCol $top={2} $gap={7}>
              <SmallRow $iw={15}><FillI />Shape Fill <Chev /></SmallRow>
              <SmallRow $iw={15}><OutlineI />Shape Outline <Chev /></SmallRow>
              <SmallRow $iw={15}><EffectI />Shape Effects <Chev /></SmallRow>
            </SmallCol>
          </GroupBody>
          <GroupFoot><GroupLabel>Drawing</GroupLabel><LauncherBox><Launcher /></LauncherBox></GroupFoot>
        </Group>

        <Group $w={96}>
          <GroupBody $pad={13}>
            <SmallCol $top={2}>
              <SmallRow $iw={15} $tx={17}><FindI />Find</SmallRow>
              <SmallRow $iw={15} $tx={17}><ReplaceI />Replace <Chev /></SmallRow>
              <SmallRow $iw={13} $tx={17}><SelectI />Select <Chev /></SmallRow>
            </SmallCol>
          </GroupBody>
          <GroupFoot><GroupLabel>Editing</GroupLabel></GroupFoot>
        </Group>

        <Group $w={54}>
          <GroupBody>
            <Big $w={54}><BigIcon><MicI /></BigIcon><BigLine>Dictate</BigLine><BigLine><Chev /></BigLine></Big>
          </GroupBody>
          <GroupFoot><GroupLabel>Voice</GroupLabel></GroupFoot>
        </Group>

        <Group $w={55}>
          <GroupBody>
            <Big $w={55}><BigIcon><IdeasI /></BigIcon><BigLine>Design</BigLine><BigLine>Ideas</BigLine></Big>
          </GroupBody>
          <GroupFoot><GroupLabel>Designer</GroupLabel></GroupFoot>
        </Group>

        <Tail><CollapseI /></Tail>
      </Ribbon>

      <Workspace>
        <ThumbPane>
          <ThumbList>
            {thumbs.map(n => (
              <ThumbRow key={n}>
                <ThumbNum $on={n === 155}>{n}</ThumbNum>
                <ThumbBox $on={n === 155}><Thumb n={n} /></ThumbBox>
              </ThumbRow>
            ))}
          </ThumbList>
          <VScroll $w={14}>
            <ScrollBtn><Tri /></ScrollBtn>
            <ScrollThumb $h={38} $gap={475} />
            <ScrollBtn $gap={3}><Tri $down /></ScrollBtn>
          </VScroll>
        </ThumbPane>

        <Editor>
          <EditArea>
            <RulerCorner><CornerBtn /></RulerCorner>
            <HRulerWrap><HRuler /></HRulerWrap>
            <RightCol>
              <RightTrack>
                <ScrollBtn><Tri /></ScrollBtn>
                <ScrollThumb $h={18} $gap={411} />
                <ScrollBtn $gap={2}><Tri $down /></ScrollBtn>
                <NavStack>
                  <NavI />
                  <NavI down />
                </NavStack>
              </RightTrack>
            </RightCol>
            <VRulerWrap><VRuler /></VRulerWrap>
            <Slide>
              <SlideTitle>THE TRANSPORTATION PROBLEM</SlideTitle>
              <BodyLine>Example (cont.)</BodyLine>
              <Heading>2. The Least Cost Cell</Heading>
              <Table>
                <Th $blue />
                <Th><Wavy>W1</Wavy></Th>
                <Th><Wavy>W2</Wavy></Th>
                <Th><Wavy>W3</Wavy></Th>
                <Th><Wavy>W4</Wavy></Th>
                <Th $blue>Supply/Output</Th>

                <RowHead $bg={lightBlue}>Cannery 1</RowHead>
                <CostCell cost={464} rank={4} value={0} />
                <CostCell cost={513} value={25} />
                <CostCell cost={654} value={0} />
                <CostCell cost={867} value={50} />
                <Cell $bg={lightBlue} $tight>
                  <SupplyNum><Strike>75</Strike></SupplyNum>
                  <SupplyNum>50 0</SupplyNum>
                </Cell>

                <RowHead $bg={green}>Cannery 2</RowHead>
                <CostCell cost={352} rank={1} value={85} />
                <CostCell cost={416} value={40} />
                <CostCell cost={690} value={0} />
                <CostCell cost={791} value={0} />
                <Cell $tight>
                  <SupplyNum><Strike>125 </Strike><SmallStrike>40</SmallStrike></SupplyNum>
                  <SupplyNum $size={14} $h={20}>0</SupplyNum>
                </Cell>

                <RowHead $bg={lightBlue}>Cannery 3</RowHead>
                <CostCell cost={995} value={0} />
                <CostCell cost={682} value={0} />
                <CostCell cost={388} rank={2} value={70} />
                <CostCell cost={685} value={30} />
                <Cell $bg={lightBlue} $tight>
                  <SupplyNum><Strike>100</Strike></SupplyNum>
                  <SupplyNum>30 0</SupplyNum>
                </Cell>

                <RowHead $bg={pale} $last>Demand/<br />Allocation</RowHead>
                <Cell $tight><SupplyNum><Strike>85  0</Strike></SupplyNum></Cell>
                <Cell $tight><SupplyNum><Strike>65  25</Strike></SupplyNum><SupplyNum>0</SupplyNum></Cell>
                <Cell $tight><SupplyNum><Strike>70</Strike></SupplyNum><SupplyNum>0</SupplyNum></Cell>
                <Cell $tight><SupplyNum>85 0</SupplyNum></Cell>
                <Cell $bg={pale} $tight />
              </Table>
              <TotalLine>Total Transport Cost =25  * 513 + 50 *867 +85+352+416*40+70*388+30*685 =<Caret /></TotalLine>
              <FooterRow>
                <FootText $x={40} $w={24} $sx={.9}>Fall 2020</FootText>
                <FootText $x={509} $w={113} $sx={.8}>TTE 451 OPERATION RESEARCH / ELDESSOUKI</FootText>
                <FootText $x={19} $w={10} $sx={.9}>155</FootText>
              </FooterRow>
              <Selection>
                <RotStem />
                <RotIcon><RotateI /></RotIcon>
                {handles.map(([x, y]) => <Handle key={`${x}-${y}`} $x={x} $y={y} />)}
              </Selection>
              <TextCursor />
              <MouseBeam><IBeamI /></MouseBeam>
            </Slide>
          </EditArea>
          <NotesPane>Click to add notes</NotesPane>
        </Editor>
        <RightStrip />
      </Workspace>

      <StatusBar>
        <StatusText $w={93}>Slide 155 of 157</StatusText>
        <StatusIcon $w={16}><SpellI /></StatusIcon>
        <StatusText $w={15} />
        <StatusText $w={752}>English (United States)</StatusText>
        <NotesI />
        <StatusText $w={45} $pad={2}>Notes</StatusText>
        <StatusIcon $w={38} $on><NormalI /></StatusIcon>
        <StatusIcon $w={38}><SorterI /></StatusIcon>
        <StatusIcon $w={38}><ReadI /></StatusIcon>
        <StatusIcon $w={38}><ShowI /></StatusIcon>
        <StatusIcon $w={18}>−</StatusIcon>
        <ZoomBar />
        <StatusIcon $w={16}>+</StatusIcon>
        <StatusText $w={36} $center>69%</StatusText>
        <StatusIcon $w={20}><FitI /></StatusIcon>
      </StatusBar>
      <BottomStrip />
    </Page>
  );
}
